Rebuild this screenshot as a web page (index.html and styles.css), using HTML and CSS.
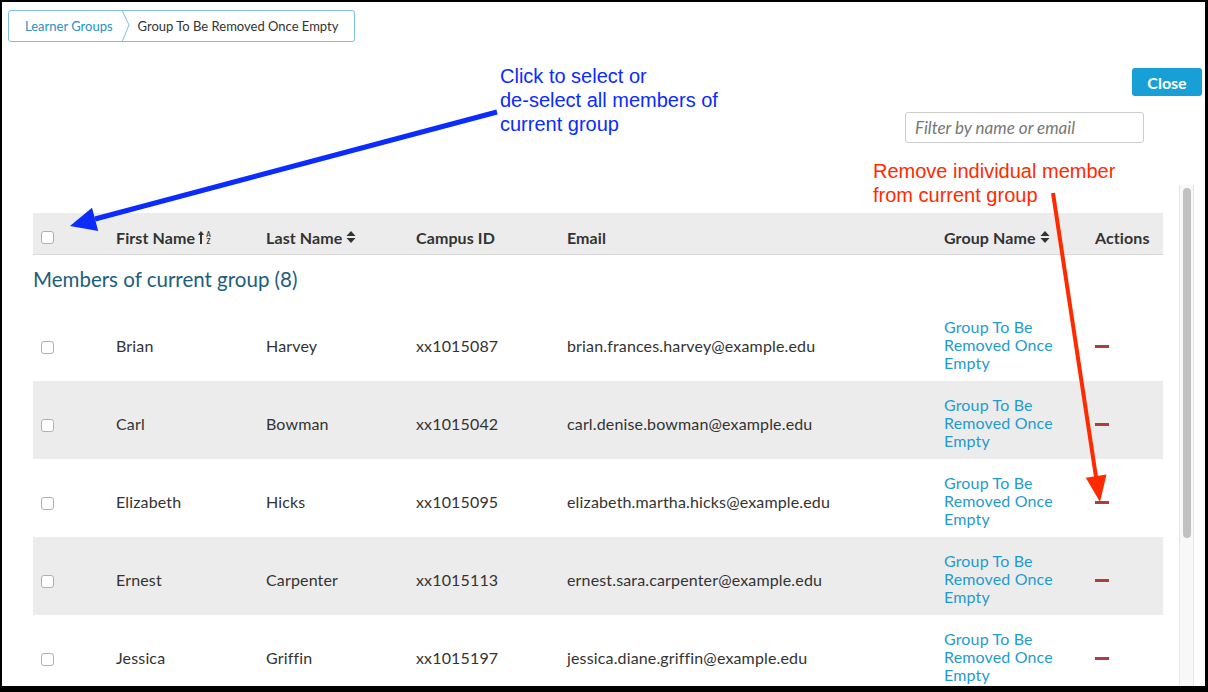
FILE: index.html
```html
<!DOCTYPE html>
<html>
<head>
<meta charset="utf-8">
<link rel="stylesheet" href="styles.css">
</head>
<body>
<div class="frame">
  <div class="top">
    <nav class="crumbs">
      <span class="crumb-link">Learner Groups</span>
      <svg class="crumb-sep" width="10" height="32" viewBox="0 0 10 32"><polyline points="1,0 8,15 1,32" fill="none" stroke="#7fc0e0" stroke-width="1"/></svg>
      <span class="crumb-current">Group To Be Removed Once Empty</span>
    </nav>
  </div>
  <div class="actions">
    <button class="close-btn">Close</button>
  </div>
  <div class="filter-row">
    <input class="filter" type="text" placeholder="Filter by name or email">
  </div>
  <div class="main">
    <div class="content">
      <div class="thead">
        <div class="cell"><span class="check"></span></div>
        <div class="cell">First Name
          <svg class="ico-alpha" width="15" height="15" viewBox="0 0 15 15"><path d="M3 1 L6 5 H4 V14 H2 V5 H0 Z" fill="#333"/><text x="10.5" y="6.5" font-size="6.5" font-weight="700" text-anchor="middle" font-family="Lato, sans-serif" fill="#333">A</text><text x="10.5" y="14" font-size="6.5" font-weight="700" text-anchor="middle" font-family="Lato, sans-serif" fill="#333">Z</text></svg>
        </div>
        <div class="cell">Last Name
          <svg class="ico-sort" width="10" height="14" viewBox="0 0 10 14"><polygon points="5,1 9.5,6 0.5,6" fill="#333"/><polygon points="0.5,8 9.5,8 5,13" fill="#333"/></svg>
        </div>
        <div class="cell">Campus ID</div>
        <div class="cell">Email</div>
        <div class="cell">Group Name
          <svg class="ico-sort" width="10" height="14" viewBox="0 0 10 14"><polygon points="5,1 9.5,6 0.5,6" fill="#333"/><polygon points="0.5,8 9.5,8 5,13" fill="#333"/></svg>
        </div>
        <div class="cell">Actions</div>
      </div>
      <div class="section-title">Members of current group (8)</div>
      <div class="row">
        <div class="cell"><span class="check"></span></div>
        <div class="cell">Brian</div>
        <div class="cell">Harvey</div>
        <div class="cell">xx1015087</div>
        <div class="cell">brian.frances.harvey@example.edu</div>
        <div class="cell"><span class="group-link">Group To Be Removed Once Empty</span></div>
        <div class="cell"><span class="minus"></span></div>
      </div>
      <div class="row alt">
        <div class="cell"><span class="check"></span></div>
        <div class="cell">Carl</div>
        <div class="cell">Bowman</div>
        <div class="cell">xx1015042</div>
        <div class="cell">carl.denise.bowman@example.edu</div>
        <div class="cell"><span class="group-link">Group To Be Removed Once Empty</span></div>
        <div class="cell"><span class="minus"></span></div>
      </div>
      <div class="row">
        <div class="cell"><span class="check"></span></div>
        <div class="cell">Elizabeth</div>
        <div class="cell">Hicks</div>
        <div class="cell">xx1015095</div>
        <div class="cell">elizabeth.martha.hicks@example.edu</div>
        <div class="cell"><span class="group-link">Group To Be Removed Once Empty</span></div>
        <div class="cell"><span class="minus"></span></div>
      </div>
      <div class="row alt">
        <div class="cell"><span class="check"></span></div>
        <div class="cell">Ernest</div>
        <div class="cell">Carpenter</div>
        <div class="cell">xx1015113</div>
        <div class="cell">ernest.sara.carpenter@example.edu</div>
        <div class="cell"><span class="group-link">Group To Be Removed Once Empty</span></div>
        <div class="cell"><span class="minus"></span></div>
      </div>
      <div class="row">
        <div class="cell"><span class="check"></span></div>
        <div class="cell">Jessica</div>
        <div class="cell">Griffin</div>
        <div class="cell">xx1015197</div>
        <div class="cell">jessica.diane.griffin@example.edu</div>
        <div class="cell"><span class="group-link">Group To Be Removed Once Empty</span></div>
        <div class="cell"><span class="minus"></span></div>
      </div>
    </div>
    <div class="scrollbar"><div class="thumb"></div></div>
  </div>

  <div class="note note-blue">Click to select or<br>de-select all members of<br>current group</div>
  <div class="note note-red">Remove individual member<br>from current group</div>
  <svg class="arrows" width="1208" height="692" viewBox="0 0 1208 692">
    <line x1="497" y1="112" x2="95" y2="219" stroke="#0a2cff" stroke-width="5"/>
    <polygon points="70,226 98.2,230.9 92,207.7" fill="#0a2cff"/>
    <line x1="1053" y1="193" x2="1096" y2="477" stroke="#ff2a00" stroke-width="4"/>
    <polygon points="1100,502 1106.5,474.5 1085.8,477.8" fill="#ff2a00"/>
  </svg>
</div>
</body>
</html>
```

FILE: styles.css
```css
html, body {
  margin: 0;
  padding: 0;
}
body {
  background: #000;
  padding: 2px 3px 6px 2px;
  font-family: Lato, "Open Sans", sans-serif;
  color: #333;
}
.frame {
  position: relative;
  background: #fff;
  height: 684px;
  display: flex;
  flex-direction: column;
  overflow: hidden;
}
.top {
  padding: 8px 0 0 6px;
}
.crumbs {
  display: inline-flex;
  align-items: center;
  height: 32px;
  box-sizing: border-box;
  border: 1px solid #7fc0e0;
  border-radius: 3px;
  padding: 0 16px 0 16px;
  font-size: 13px;
}
.crumb-link {
  color: #2a8fc8;
}
.crumb-sep {
  margin: 0 7px 0 8px;
}
.crumb-current {
  color: #333;
}
.actions {
  display: flex;
  justify-content: flex-end;
  padding-right: 3px;
  margin-top: 26px;
}
.close-btn {
  width: 70px;
  height: 28px;
  border: none;
  border-radius: 3px;
  background: #189fd6;
  color: #fff;
  font-family: Lato, sans-serif;
  font-weight: 700;
  font-size: 16px;
  padding: 0;
}
.filter-row {
  display: flex;
  justify-content: flex-end;
  padding-right: 61px;
  margin-top: 16px;
}
.filter {
  width: 239px;
  height: 31px;
  box-sizing: border-box;
  border: 1px solid #ccc;
  border-radius: 3px;
  padding: 0 9px;
  font-family: Lato, sans-serif;
  font-size: 17px;
  font-style: italic;
}
.filter::placeholder {
  color: #777;
}
.main {
  flex: 1;
  min-height: 0;
  margin-top: 42px;
  margin-left: 31px;
  margin-right: 11px;
  display: flex;
  gap: 16px;
}
.content {
  flex: 1;
  padding-top: 28px;
}
.scrollbar {
  background: #f8f8f8;
  border-left: 1px solid #e6e6e6;
  border-right: 1px solid #e6e6e6;
  padding: 3px 2px 0 3px;
  box-sizing: border-box;
  width: 15px;
}
.thumb {
  height: 350px;
  background: #c1c1c1;
  border-radius: 5px;
}
.thead, .row {
  display: grid;
  grid-template-columns: 83px 150px 150px 151px 377px 151px 1fr;
  align-items: center;
}
.thead {
  height: 42px;
  box-sizing: border-box;
  background: #ececec;
  border-bottom: 1px solid #d9d9d9;
  padding-top: 7px;
  font-weight: 700;
  font-size: 16px;
  letter-spacing: 0.1px;
  color: #333;
}
.thead .cell {
  display: flex;
  align-items: center;
}
.ico-alpha {
  margin-left: 3px;
}
.ico-sort {
  margin-left: 4px;
}
.check {
  display: block;
  width: 13px;
  height: 13px;
  box-sizing: border-box;
  border: 1px solid #b0b0b0;
  border-radius: 3px;
  background: #fff;
  margin-left: 8px;
}
.section-title {
  height: 48px;
  display: flex;
  align-items: center;
  font-size: 20.5px;
  color: #215e7c;
}
.row {
  height: 78px;
  box-sizing: border-box;
  padding-top: 6px;
  font-size: 16px;
  letter-spacing: 0.15px;
}
.row .check {
  margin-top: 4px;
}
.row.alt {
  background: #ececec;
}
.group-link {
  display: block;
  width: 122px;
  color: #1f9bd1;
  line-height: 18px;
}
.minus {
  display: block;
  width: 14px;
  height: 3px;
  background: #a8403c;
  margin-top: 2px;
}
.note {
  position: absolute;
  font-family: "Liberation Sans", Arial, sans-serif;
  font-size: 20px;
  line-height: 24px;
}
.note-blue {
  left: 498px;
  top: 62px;
  color: #0a2cff;
}
.note-red {
  left: 871px;
  top: 157px;
  color: #ff2a00;
}
.arrows {
  position: absolute;
  left: -2px;
  top: -2px;
  pointer-events: none;
}
```
